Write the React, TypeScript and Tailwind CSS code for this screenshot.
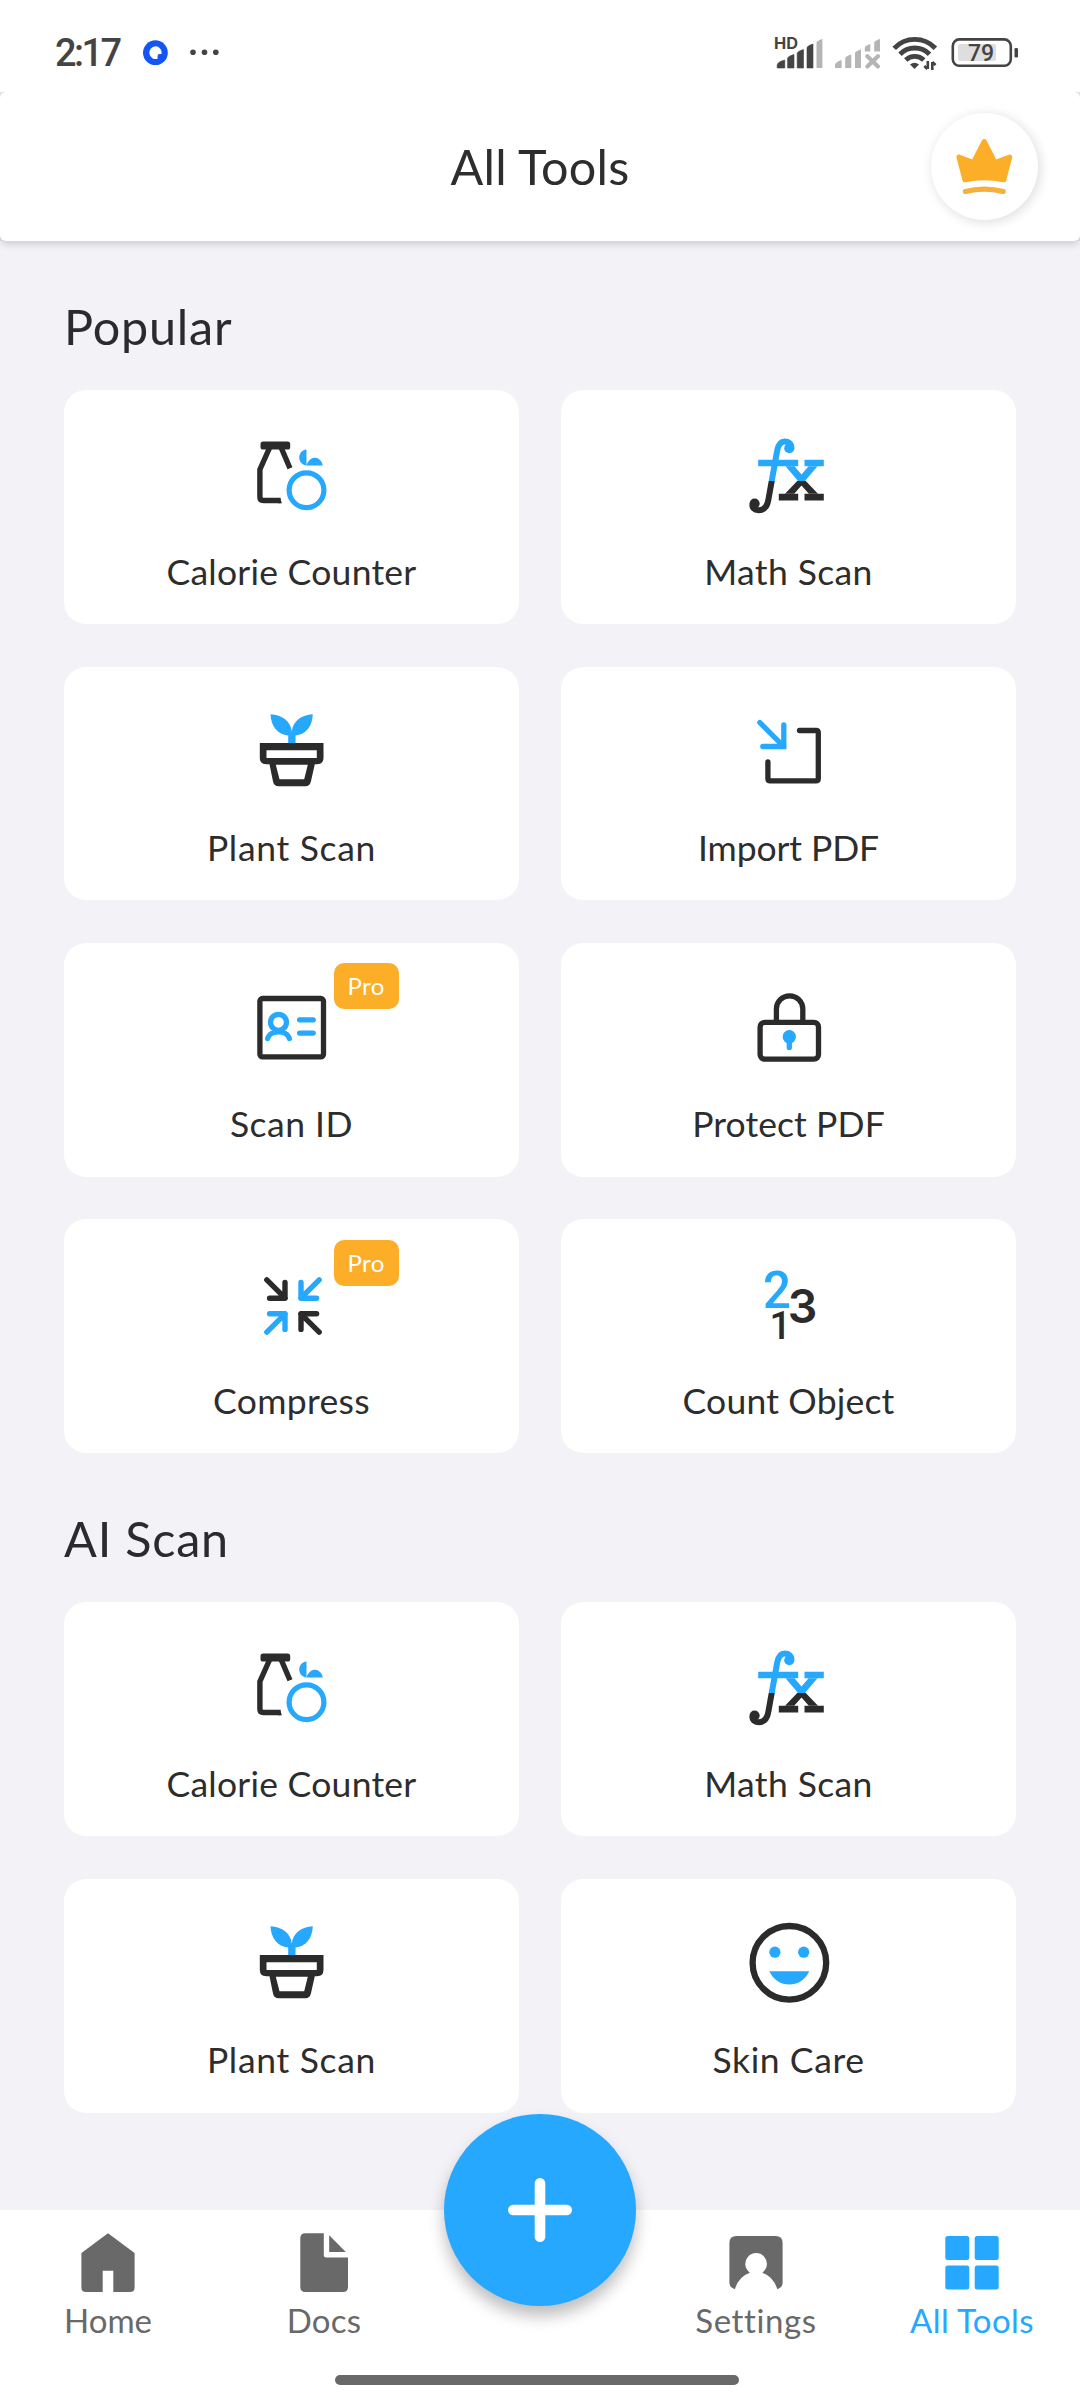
import { useId, type ReactNode } from "react";

const INK = "#2b2b2b";
const BLUE = "#26a8fe";

function Glyph({ children }: { children: ReactNode }) {
  return (
    <svg width="84" height="84" viewBox="0 0 84 84" fill="none" className="block shrink-0 overflow-visible">
      {children}
    </svg>
  );
}

function CalorieIcon() {
  return (
    <Glyph>
      <rect x="10.5" y="8.5" width="29.7" height="8" rx="2.6" fill={INK} />
      <path d="M19.5 15 L9.9 36.5 V64 Q9.9 67.5 13.4 67.5 H30.6" stroke={INK} strokeWidth="5.4" />
      <path d="M30 64.8 L31.9 70.2 H28 Z" fill={INK} />
      <path d="M31.3 15 L40 35.3" stroke={INK} strokeWidth="5.4" />
      <circle cx="56.5" cy="57.2" r="17.4" stroke={BLUE} strokeWidth="5.2" />
      <path d="M56.5 16.5 V32.5 C46.8 31.5 46.8 17.5 56.5 16.5 Z" fill={BLUE} />
      <path d="M56.5 32.5 C59.5 22.3 70.5 22.3 72.8 32.5 Z" fill={BLUE} />
    </Glyph>
  );
}

function MathIcon() {
  const id = useId();
  const paint = `url(#${id})`;
  return (
    <Glyph>
      <defs>
        <linearGradient id={id} gradientUnits="userSpaceOnUse" x1="0" y1="0" x2="0" y2="84">
          <stop offset="0.5655" stopColor={BLUE} />
          <stop offset="0.5655" stopColor={INK} />
        </linearGradient>
      </defs>
      <path
        d="M44.4 14.6 C44.4 10.5 41.5 8.4 37.8 8.4 C33.5 8.4 31.2 11.8 30.2 17.5 L21.4 66.5 C20.3 73.5 17 77.3 11.4 77.3 C7.5 77.3 5.3 75 5.3 71.5"
        stroke={paint}
        strokeWidth="6"
      />
      <circle cx="42.3" cy="15.2" r="5.1" fill={paint} />
      <circle cx="7.6" cy="70.6" r="5.1" fill={paint} />
      <path d="M11.2 26.8 H51.2 V33.2 H11.2 Z M57.5 26.8 H76.8 V33.2 H57.5 Z" fill={paint} />
      <path d="M31.8 60.8 H51.2 V67.5 H31.8 Z M57.5 60.8 H76.8 V67.5 H57.5 Z" fill={paint} />
      <path d="M38.5 33.2 H47.5 L54.5 41.5 L61.5 33.2 H70.5 L58.3 47.5 L71 60.8 H61.8 L54.5 52.5 L47.2 60.8 H38 L50.7 47.5 Z" fill={paint} />
    </Glyph>
  );
}

function PlantIcon() {
  return (
    <Glyph>
      <path d="M20.5 5.2 C32 5.8 41 12 41.8 22.8 C42.6 12 51.5 5.8 62.8 5.2 C62.4 17 56 25.6 45.5 26.5 V34 H38.2 V26.5 C27.5 25.6 21 17 20.5 5.2 Z" fill={BLUE} />
      <path
        fillRule="evenodd"
        d="M9.8 33.9 H73.5 V48.7 Q73.5 55.2 67 55.2 H64.8 L60.9 72.5 Q59.8 77.2 55.5 77.2 H28.5 Q24 77.2 23 72.5 L19.5 55.2 H16.3 Q9.8 55.2 9.8 48.7 Z M16.5 41.2 V48.9 H66.8 V41.2 Z M25.8 55.7 L29.5 70.2 H54.2 L57.8 55.7 Z"
        fill={INK}
      />
    </Glyph>
  );
}

function ImportIcon() {
  return (
    <Glyph>
      <path d="M12.8 13.5 L36.8 37.5 M36.8 15.9 V37.5 H15.8" stroke={BLUE} strokeWidth="5.3" strokeLinecap="round" strokeLinejoin="miter" />
      <path d="M52.5 21.5 H69 Q71.3 21.5 71.3 23.8 V69.4 Q71.3 71.8 69 71.8 H23.2 Q20.9 71.8 20.9 69.4 V53" stroke={INK} strokeWidth="5.3" strokeLinecap="round" />
    </Glyph>
  );
}

function IdIcon() {
  return (
    <Glyph>
      <rect x="9.9" y="13.5" width="63.6" height="58.3" rx="2.6" stroke={INK} strokeWidth="5.3" />
      <circle cx="28.5" cy="37.3" r="8" stroke={BLUE} strokeWidth="5.3" />
      <path d="M17.6 53.6 C20 44.5 37 44.5 39.4 53.6" stroke={BLUE} strokeWidth="5.2" strokeLinecap="round" />
      <path d="M49.6 34.8 H63.2 M49.6 48.1 H63.2" stroke={BLUE} strokeWidth="5.3" strokeLinecap="round" />
    </Glyph>
  );
}

function LockIcon() {
  return (
    <Glyph>
      <rect x="13.1" y="37.4" width="58.4" height="36.7" rx="4.6" stroke={INK} strokeWidth="5.3" />
      <path d="M29.4 37 V24 A13.2 13.2 0 0 1 55.8 24 V37" stroke={INK} strokeWidth="5.3" />
      <circle cx="42.3" cy="51.8" r="6.7" fill={BLUE} />
      <path d="M42.3 54 V62.4" stroke={BLUE} strokeWidth="5.3" strokeLinecap="round" />
    </Glyph>
  );
}

function CompressIcon() {
  return (
    <Glyph>
      <g strokeWidth="5.4" strokeLinecap="round" strokeLinejoin="round">
        <path d="M16.8 17.8 L35.2 36.2 M35 20.4 V36.2 H19.6" stroke={INK} />
        <path d="M69.2 17.8 L50.8 36.2 M51 20.4 V36.2 H66.6" stroke={BLUE} />
        <path d="M16.8 70.2 L35.2 51.8 M35 67.4 V51.8 H19.6" stroke={BLUE} />
        <path d="M69.2 70.2 L50.8 51.8 M51 67.4 V51.8 H66.6" stroke={INK} />
      </g>
    </Glyph>
  );
}

function CountIcon() {
  return (
    <Glyph>
      <text x="16" y="45.5" fontSize="52.5" fontWeight="500" fontFamily="Roboto, sans-serif" fill={BLUE} textLength="28" lengthAdjust="spacingAndGlyphs">2</text>
      <text x="40.8" y="60.8" fontSize="46.5" fontWeight="600" fontFamily="Inter, sans-serif" fill={INK}>3</text>
      <text x="22.4" y="77.2" fontSize="38" fontWeight="500" fontFamily="Roboto, sans-serif" fill={INK}>1</text>
    </Glyph>
  );
}

function SmileIcon() {
  return (
    <Glyph>
      <circle cx="42.4" cy="41.8" r="36.8" stroke={INK} strokeWidth="6.3" />
      <circle cx="27.9" cy="31.2" r="5.6" fill={BLUE} />
      <circle cx="56.7" cy="31.2" r="5.6" fill={BLUE} />
      <path d="M22.3 50.2 H62.3 C54.5 67.9 30.1 67.9 22.3 50.2 Z" fill={BLUE} />
    </Glyph>
  );
}

type Tool = { name: string; icon: ReactNode; tracking: string; pro?: boolean };

const calorie: Tool = { name: "Calorie Counter", icon: <CalorieIcon />, tracking: "tracking-[0.25px]" };
const math: Tool = { name: "Math Scan", icon: <MathIcon />, tracking: "tracking-[0.4px]" };
const plant: Tool = { name: "Plant Scan", icon: <PlantIcon />, tracking: "tracking-[0.7px]" };

const popular: Tool[] = [
  calorie,
  math,
  plant,
  { name: "Import PDF", icon: <ImportIcon />, tracking: "tracking-[-0.1px]" },
  { name: "Scan ID", icon: <IdIcon />, tracking: "tracking-[0.5px]", pro: true },
  { name: "Protect PDF", icon: <LockIcon />, tracking: "tracking-[0.1px]" },
  { name: "Compress", icon: <CompressIcon />, tracking: "tracking-[0.35px]", pro: true },
  { name: "Count Object", icon: <CountIcon />, tracking: "tracking-[0.2px]" },
];

const aiScan: Tool[] = [
  calorie,
  math,
  plant,
  { name: "Skin Care", icon: <SmileIcon />, tracking: "tracking-[0.6px]" },
];

function ToolCard({ tool }: { tool: Tool }) {
  return (
    <button className="relative flex h-[233.8px] flex-col items-center rounded-[22px] bg-white pt-[42.5px]">
      {tool.icon}
      <span className={`mt-[33px] text-[35.5px] leading-[44px] whitespace-nowrap text-[#2d2d2d] ${tool.tracking}`}>
        {tool.name}
      </span>
      {tool.pro && (
        <span className="absolute top-[20.3px] left-[269.7px] flex h-[46px] w-[65px] items-center justify-center rounded-[10px] bg-[#fdae28] text-[24px] leading-none tracking-[0.5px] text-white">
          Pro
        </span>
      )}
    </button>
  );
}

function Section({ title, tools }: { title: string; tools: Tool[] }) {
  return (
    <section className="px-16">
      <h2 className="flex h-[149.4px] items-center pt-[21px] text-[48.5px] leading-none tracking-[0.8px] text-[#2b2b2f]">{title}</h2>
      <div className="grid grid-cols-2 gap-x-[42px] gap-y-[42.5px]">
        {tools.map((tool) => (
          <ToolCard key={tool.name} tool={tool} />
        ))}
      </div>
    </section>
  );
}

function StatusBar() {
  return (
    <div className="flex h-[92px] items-start bg-white">
      <span className="mt-[33px] ml-[55px] w-[88px] font-['Roboto',sans-serif] text-[38px] leading-[41px] font-medium tracking-[-2.6px] text-[#444]">2:17</span>
      <svg width="80" height="40" viewBox="143 32 80 40" className="mt-8">
        <circle cx="155.4" cy="52.7" r="12.4" fill="#1355f5" />
        <path d="M155.4 46.3 A6.4 6.4 0 0 1 161.6 54 H159.5 Q157.6 54 157.6 56 V58.8 A6.4 6.4 0 1 1 155.4 46.3 Z" fill="white" />
        <circle cx="193" cy="52.3" r="2.8" fill="#444" />
        <circle cx="204.5" cy="52.3" r="2.8" fill="#444" />
        <circle cx="215.8" cy="52.3" r="2.8" fill="#444" />
      </svg>
      <svg width="250" height="40" viewBox="770 32 250 40" className="mt-8 ml-auto mr-[60px]" fill="none">
        <text x="774" y="49" fontSize="16" fontWeight="700" fontFamily="Inter, sans-serif" fill="#444" textLength="24" lengthAdjust="spacingAndGlyphs">HD</text>
        <path d="M777.2 68 V65 Q777.5 62 784.8 60 V68 Z M787.6 68 V58 Q788.5 56 794 54.5 V68 Z M797.2 68 V53 Q798 51 803.5 49.5 V68 Z M807 68 V47.5 Q807.8 45.6 813 44 V68 Z" fill="#444" stroke="#444" strokeWidth="0.6" strokeLinejoin="round" />
        <path d="M816.5 68 V42.5 Q817.3 40.5 822.4 39 V68 Z" fill="#b5b5b5" />
        <path d="M835 68 V65 Q835.5 62 841.6 60 V68 Z M845.2 68 V58 Q846 56 851.3 54.5 V68 Z M855 68 V53 Q855.6 51 861 49.5 V68 Z M864.8 51.5 V47.5 Q865.6 45.6 870.3 44 V51.5 Z M874.2 51.5 V42.5 Q875 40.5 880 39 V51.5 Z" fill="#b5b5b5" />
        <path d="M867.3 56.2 L878 66.4 M878 56.2 L867.3 66.4" stroke="#b5b5b5" strokeWidth="4.2" strokeLinecap="round" />
        <g stroke="#444" strokeWidth="4.9">
          <path d="M894.2 48.3 Q902.5 39.4 914.7 39.4 Q927 39.4 935.4 48.3" />
          <path d="M900 54.2 Q906 48 914.7 48 Q923.5 48 929.5 54.2" />
          <path d="M905.8 60 Q909.5 56.4 914.7 56.4 Q920 56.4 923.8 60" />
        </g>
        <path d="M910 64.6 Q914.5 61 919 64.6 L914.5 69 Z" fill="#444" />
        <path d="M927.8 61 V69 M924.3 66 L927.3 69 M932.3 70 V62 M932.3 62 L935.6 65" stroke="#444" strokeWidth="2.6" />
        <rect x="952.8" y="39.4" width="58" height="26.4" rx="6.5" stroke="#444" strokeWidth="2.6" />
        <rect x="958" y="44" width="38" height="17" rx="2" fill="#dedede" />
        <rect x="1014.5" y="48" width="3.5" height="9.5" rx="1.2" fill="#444" />
        <text x="968" y="61" fontSize="23" fontWeight="500" fontFamily="Roboto, sans-serif" fill="#444">79</text>
      </svg>
    </div>
  );
}

function Header() {
  return (
    <div className="relative z-10 bg-[#e3e3e6]">
      <StatusBar />
      <header className="relative flex h-[149px] items-center justify-center rounded-[6px] bg-white shadow-[0_5px_6px_-1px_rgba(0,0,0,0.13)]">
        <h1 className="text-[48.5px] leading-none tracking-[0.25px] text-[#2d2d2d]">All Tools</h1>
        <button className="absolute top-[21px] left-[930.5px] flex size-[107px] items-center justify-center rounded-full bg-white shadow-[2px_2px_12px_rgba(0,0,0,0.14)]">
          <svg width="60" height="60" viewBox="954 136 60 60" fill="none">
            <path d="M959 156 L973.5 161.5 L984.2 140.5 L995 161.5 L1009.7 156 L1003.8 178.8 Q984.2 174.5 964.9 178.8 Z" fill="#fdae28" stroke="#fdae28" strokeWidth="5" strokeLinejoin="round" />
            <path d="M965.4 190.6 Q984.2 185.5 1003.2 190.6" stroke="#f5b03a" strokeWidth="5.2" strokeLinecap="round" />
          </svg>
        </button>
      </header>
    </div>
  );
}

type NavItemProps = { label: string; tracking: string; active?: boolean; children: ReactNode };

function NavItem({ label, tracking, active, children }: NavItemProps) {
  return (
    <button className={`flex w-[216px] flex-col items-center pt-[20px] ${active ? "text-[#26a8fe]" : "text-[#696969]"}`}>
      <svg width="66" height="66" viewBox="0 0 66 66" fill="currentColor">
        {children}
      </svg>
      <span className={`mt-[2px] text-[33px] leading-[44px] whitespace-nowrap [font-variant-ligatures:none] ${tracking}`}>{label}</span>
    </button>
  );
}

function BottomNav() {
  return (
    <nav className="relative h-[191px] bg-white">
      <div className="flex">
        <NavItem label="Home" tracking="tracking-normal">
          <path d="M33 3.3 L59.6 23 V57.5 Q59.6 62 55 62 H38.3 V40.8 H27.7 V62 H11 Q6.4 62 6.4 57.5 V23 Z" />
        </NavItem>
        <NavItem label="Docs" tracking="tracking-[0.2px]">
          <path d="M14.3 3.3 H32.8 V25 Q32.8 27.5 35.3 27.5 H57 V57 Q57 62 52 62 H14.3 Q9.3 62 9.3 57 V8.3 Q9.3 3.3 14.3 3.3 Z" />
          <path d="M38.2 5.3 L54.8 22 H38.2 Z" />
        </NavItem>
        <div className="w-[216px]" />
        <NavItem label="Settings" tracking="tracking-[0.6px]">
          <path d="M13.4 6 H52.6 Q59.6 6 59.6 13 V53 Q59.6 57.5 54.3 59.2 Q50.5 46.5 39.3 42.7 A10.8 10.8 0 1 0 26.9 42.7 Q15.5 46.5 11.9 59.2 Q6.4 57.5 6.4 53 V13 Q6.4 6 13.4 6 Z" />
        </NavItem>
        <NavItem label="All Tools" tracking="tracking-[0.4px]" active>
          <rect x="6.3" y="6" width="24" height="24" rx="2.5" />
          <rect x="35.7" y="6" width="24" height="24" rx="2.5" />
          <rect x="6.3" y="35.4" width="24" height="24" rx="2.5" />
          <rect x="35.7" y="35.4" width="24" height="24" rx="2.5" />
        </NavItem>
      </div>
      <button className="absolute -top-24 left-[444px] flex size-48 items-center justify-center rounded-full bg-[#26a8fe] shadow-[0_10px_16px_rgba(0,0,0,0.26)]">
        <svg width="64" height="64" viewBox="0 0 64 64" stroke="white" strokeWidth="10.6" strokeLinecap="round">
          <path d="M32 5.3 V58.7 M5.3 32 H58.7" />
        </svg>
      </button>
      <div className="absolute top-[165px] left-[334.5px] h-[10px] w-[404px] rounded-full bg-[#696969]" />
    </nav>
  );
}

export default function App() {
  return (
    <div className="flex h-[2401px] w-[1080px] flex-col overflow-hidden bg-[#f2f2f7] font-['Lato',sans-serif]">
      <Header />
      <main className="min-h-0 flex-1">
        <Section title="Popular" tools={popular} />
        <Section title="AI Scan" tools={aiScan} />
      </main>
      <BottomNav />
    </div>
  );
}
